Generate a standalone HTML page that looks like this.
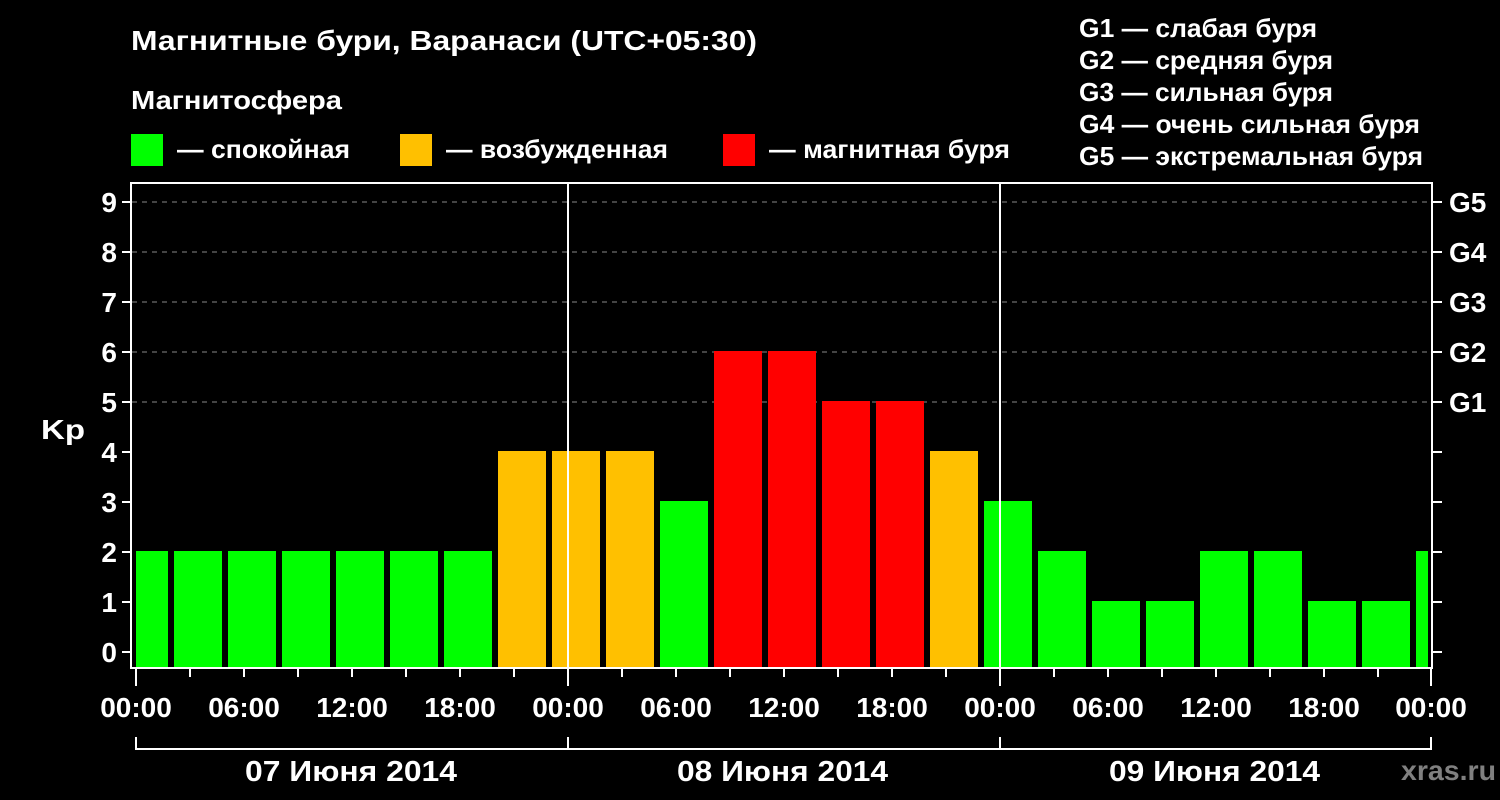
<!DOCTYPE html><html><head><meta charset="utf-8"><style>body{margin:0;background:#000}svg{display:block}text{font-family:"Liberation Sans",sans-serif;font-weight:bold;fill:#fff}</style></head><body>
<svg width="1500" height="800" viewBox="0 0 1500 800">
<rect width="1500" height="800" fill="#000"/>
<text x="131" y="50" font-size="28" textLength="626" lengthAdjust="spacingAndGlyphs">Магнитные бури, Варанаси (UTC+05:30)</text>
<text x="131" y="109" font-size="26" textLength="211" lengthAdjust="spacingAndGlyphs">Магнитосфера</text>
<rect x="131" y="134" width="32" height="32" fill="#00ff00"/><text x="177" y="158" font-size="26" textLength="173" lengthAdjust="spacingAndGlyphs">— спокойная</text>
<rect x="400" y="134" width="32" height="32" fill="#ffc000"/><text x="446" y="158" font-size="26" textLength="222" lengthAdjust="spacingAndGlyphs">— возбужденная</text>
<rect x="723" y="134" width="32" height="32" fill="#ff0000"/><text x="769" y="158" font-size="26" textLength="241" lengthAdjust="spacingAndGlyphs">— магнитная буря</text>
<g font-size="26"><text x="1079" y="37" textLength="238" lengthAdjust="spacingAndGlyphs">G1 — слабая буря</text><text x="1079" y="69" textLength="254" lengthAdjust="spacingAndGlyphs">G2 — средняя буря</text><text x="1079" y="101" textLength="254" lengthAdjust="spacingAndGlyphs">G3 — сильная буря</text><text x="1079" y="133" textLength="341" lengthAdjust="spacingAndGlyphs">G4 — очень сильная буря</text><text x="1079" y="165" textLength="344" lengthAdjust="spacingAndGlyphs">G5 — экстремальная буря</text></g>
<g stroke="#888" stroke-width="1" stroke-dasharray="5,5">
<line x1="132" y1="202" x2="1431" y2="202"/><line x1="132" y1="252" x2="1431" y2="252"/><line x1="132" y1="302" x2="1431" y2="302"/><line x1="132" y1="352" x2="1431" y2="352"/><line x1="132" y1="402" x2="1431" y2="402"/></g>
<g>
<rect x="136" y="551" width="32" height="117" fill="#00ff00"/>
<rect x="174" y="551" width="48" height="117" fill="#00ff00"/>
<rect x="228" y="551" width="48" height="117" fill="#00ff00"/>
<rect x="282" y="551" width="48" height="117" fill="#00ff00"/>
<rect x="336" y="551" width="48" height="117" fill="#00ff00"/>
<rect x="390" y="551" width="48" height="117" fill="#00ff00"/>
<rect x="444" y="551" width="48" height="117" fill="#00ff00"/>
<rect x="498" y="451" width="48" height="217" fill="#ffc000"/>
<rect x="552" y="451" width="48" height="217" fill="#ffc000"/>
<rect x="606" y="451" width="48" height="217" fill="#ffc000"/>
<rect x="660" y="501" width="48" height="167" fill="#00ff00"/>
<rect x="714" y="351" width="48" height="317" fill="#ff0000"/>
<rect x="768" y="351" width="48" height="317" fill="#ff0000"/>
<rect x="822" y="401" width="48" height="267" fill="#ff0000"/>
<rect x="876" y="401" width="48" height="267" fill="#ff0000"/>
<rect x="930" y="451" width="48" height="217" fill="#ffc000"/>
<rect x="984" y="501" width="48" height="167" fill="#00ff00"/>
<rect x="1038" y="551" width="48" height="117" fill="#00ff00"/>
<rect x="1092" y="601" width="48" height="67" fill="#00ff00"/>
<rect x="1146" y="601" width="48" height="67" fill="#00ff00"/>
<rect x="1200" y="551" width="48" height="117" fill="#00ff00"/>
<rect x="1254" y="551" width="48" height="117" fill="#00ff00"/>
<rect x="1308" y="601" width="48" height="67" fill="#00ff00"/>
<rect x="1362" y="601" width="48" height="67" fill="#00ff00"/>
<rect x="1416" y="551" width="12" height="117" fill="#00ff00"/>
</g>
<g stroke="#fff" stroke-width="2" fill="none">
<rect x="131" y="183" width="1301" height="485"/>
<line x1="568" y1="183" x2="568" y2="668"/><line x1="1000" y1="183" x2="1000" y2="668"/>
<path d="M122 202H131M122 252H131M122 302H131M122 352H131M122 402H131M122 452H131M122 502H131M122 552H131M122 602H131M122 652H131"/>
<path d="M1432 202H1442M1432 252H1442M1432 302H1442M1432 352H1442M1432 402H1442M1432 452H1442M1432 502H1442M1432 552H1442M1432 602H1442M1432 652H1442"/>
<path d="M136 668V686M190 668V677M244 668V677M298 668V677M352 668V677M406 668V677M460 668V677M514 668V677M568 668V686M622 668V677M676 668V677M730 668V677M784 668V677M838 668V677M892 668V677M946 668V677M1000 668V686M1054 668V677M1108 668V677M1162 668V677M1216 668V677M1270 668V677M1324 668V677M1378 668V677M1431 668V686"/>
<path d="M136 737V749H1431V737M568 737V749M1000 737V749"/>
</g>
<g font-size="28" text-anchor="end"><text x="117" y="212">9</text><text x="117" y="262">8</text><text x="117" y="312">7</text><text x="117" y="362">6</text><text x="117" y="412">5</text><text x="117" y="462">4</text><text x="117" y="512">3</text><text x="117" y="562">2</text><text x="117" y="612">1</text><text x="117" y="662">0</text></g>
<text x="41" y="439" font-size="28" textLength="44" lengthAdjust="spacingAndGlyphs">Kp</text>
<g font-size="28"><text x="1449" y="212">G5</text><text x="1449" y="262">G4</text><text x="1449" y="312">G3</text><text x="1449" y="362">G2</text><text x="1449" y="412">G1</text></g>
<g font-size="28" text-anchor="middle"><text x="136" y="717">00:00</text><text x="244" y="717">06:00</text><text x="352" y="717">12:00</text><text x="460" y="717">18:00</text><text x="568" y="717">00:00</text><text x="676" y="717">06:00</text><text x="784" y="717">12:00</text><text x="892" y="717">18:00</text><text x="1000" y="717">00:00</text><text x="1108" y="717">06:00</text><text x="1216" y="717">12:00</text><text x="1324" y="717">18:00</text><text x="1431" y="717">00:00</text></g>
<g font-size="29"><text x="245" y="781" textLength="212" lengthAdjust="spacingAndGlyphs">07 Июня 2014</text><text x="677" y="781" textLength="211" lengthAdjust="spacingAndGlyphs">08 Июня 2014</text><text x="1109" y="781" textLength="211" lengthAdjust="spacingAndGlyphs">09 Июня 2014</text></g>
<text x="1401" y="780" font-size="28" textLength="95" lengthAdjust="spacingAndGlyphs" style="fill:#808080">xras.ru</text>
</svg></body></html>
